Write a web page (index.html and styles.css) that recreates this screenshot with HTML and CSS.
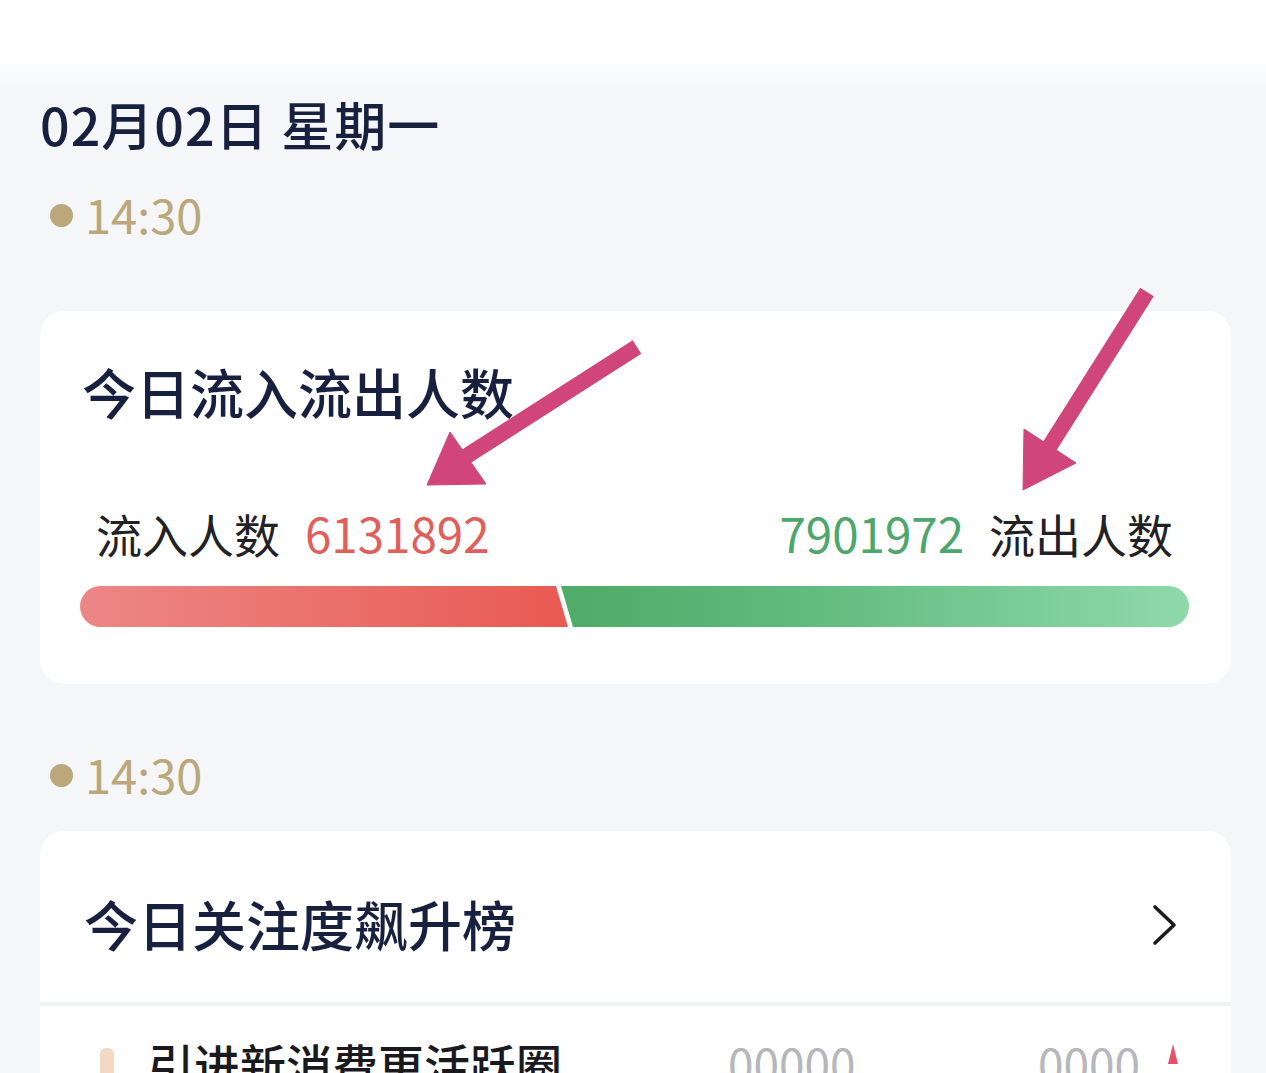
FILE: index.html
```html
<!DOCTYPE html>
<html lang="zh-CN">
<head>
<meta charset="utf-8">
<title>流入流出</title>
<link rel="stylesheet" href="styles.css">
</head>
<body>
<div class="page">
  <div class="date">02月02日 星期一</div>

  <div class="time"><span class="dot"></span><span>14:30</span></div>
  <section class="card flow-card">
    <h2 class="card-title">今日流入流出人数</h2>
    <div class="flow-row">
      <div class="flow-side">
        <span class="flow-label">流入人数</span>
        <span class="num in">6131892</span>
      </div>
      <div class="flow-side">
        <span class="num out">7901972</span>
        <span class="flow-label">流出人数</span>
      </div>
    </div>
    <div class="bar">
      <div class="bar-in" style="width:488px"></div>
      <div class="bar-out"></div>
    </div>
  </section>

  <div class="time time-2"><span class="dot"></span><span>14:30</span></div>
  <section class="card rank-card">
    <div class="rank-head">
      <h2 class="card-title">今日关注度飙升榜</h2>
      <svg class="chev" width="26" height="42" viewBox="0 0 26 42"><path d="M3 3 L22 21 L3 39" fill="none" stroke="#1b1b1f" stroke-width="3.6" stroke-linecap="round" stroke-linejoin="round"/></svg>
    </div>
    <div class="rank-row">
      <span class="rank-no"></span>
      <span class="rank-name">引进新消费更活跃圈</span>
      <span class="rank-val">00000</span>
      <span class="rank-val2">0000</span>
      <span class="rank-up"></span>
    </div>
  </section>
</div>

<svg class="arrows" width="1266" height="1073" viewBox="0 0 1266 1073">
  <g fill="#d0467a" stroke="#d0467a">
    <line x1="637" y1="347" x2="462" y2="459" stroke-width="16"/>
    <polygon points="427,485 450,432 486,484" stroke-width="1" stroke-linejoin="round"/>
    <line x1="1147" y1="292" x2="1046" y2="452" stroke-width="16"/>
    <polygon points="1023,490 1024,429 1076,463" stroke-width="1" stroke-linejoin="round"/>
  </g>
</svg>
</body>
</html>
```
FILE: styles.css
```css
html, body {
  margin: 0;
  padding: 0;
}
body {
  background: #f5f6f8 linear-gradient(#ffffff 0, #ffffff 58px, #f5f6f8 90px) no-repeat;
  background-size: 100% 90px;
  font-family: "Noto Sans CJK SC", "Noto Sans", sans-serif;
  height: 1073px;
  overflow: hidden;
  position: relative;
}
.page {
  padding: 98px 35px 0 40px;
}
.date {
  font-size: 52px;
  line-height: 52px;
  font-weight: 500;
  letter-spacing: 1px;
  color: #17203f;
}
.time {
  margin-top: 40px;
  display: flex;
  align-items: center;
  font-size: 47px;
  line-height: 48px;
  color: #bba77c;
  font-weight: 400;
}
.time-2 {
  margin-top: 66px;
}
.dot {
  width: 23px;
  height: 23px;
  border-radius: 50%;
  background: #bba77c;
  margin-left: 10px;
  margin-right: 12px;
  margin-top: 2px;
}
.card {
  background: #ffffff;
  border-radius: 24px;
}
.flow-card {
  margin-top: 73px;
  padding: 54px 42px 57px 40px;
}
.card-title {
  margin: 0 0 0 2px;
  font-size: 54px;
  line-height: 54px;
  font-weight: 500;
  color: #17203f;
}
.flow-row {
  margin-top: 91px;
  padding: 0 16px;
  display: flex;
  justify-content: space-between;
  font-size: 46px;
  line-height: 46px;
}
.flow-side {
  display: flex;
  align-items: baseline;
  gap: 25px;
}
.flow-label {
  color: #222226;
}
.num {
  font-size: 47.5px;
}
.num.in {
  color: #df605a;
}
.num.out {
  color: #4da76c;
}
.bar {
  margin-top: 30px;
  height: 41px;
  border-radius: 21px;
  overflow: hidden;
  display: flex;
}
.bar-in {
  flex: none;
  background: linear-gradient(to right, #ec8786, #e95a52);
  clip-path: polygon(0 0, calc(100% - 12px) 0, 100% 100%, 0 100%);
}
.bar-out {
  flex: 1;
  margin-left: -7px;
  background: linear-gradient(to right, #4fab67, #62bb7f 40%, #8fd9ab);
  clip-path: polygon(0 0, 100% 0, 100% 100%, 12px 100%);
}
.rank-card {
  margin-top: 33px;
  height: 400px;
}
.rank-head {
  padding: 66px 53px 51px 42px;
  display: flex;
  justify-content: space-between;
  align-items: center;
  border-bottom: 4px solid #f1f2f4;
}
.chev {
  display: block;
  margin-top: 2px;
}
.rank-row {
  padding: 34px 0 0 60px;
  display: flex;
  align-items: center;
  font-size: 46px;
  line-height: 46px;
  color: #1a1a1e;
}
.rank-no {
  width: 14px;
  height: 30px;
  background: #f3d8c4;
  border-radius: 6px 6px 0 0;
  margin-right: 34px;
  align-self: flex-start;
  margin-top: 8px;
}
.rank-name {
  width: 580px;
  font-weight: 500;
}
.rank-val {
  color: #b6b6bc;
  width: 310px;
}
.rank-val2 {
  color: #b6b6bc;
  width: 130px;
}
.rank-up {
  width: 10px;
  height: 20px;
  background: #e8506a;
  clip-path: polygon(50% 0, 100% 100%, 0 100%);
  align-self: flex-start;
  margin-top: 4px;
}
.arrows {
  position: absolute;
  left: 0;
  top: 0;
  pointer-events: none;
}
```
